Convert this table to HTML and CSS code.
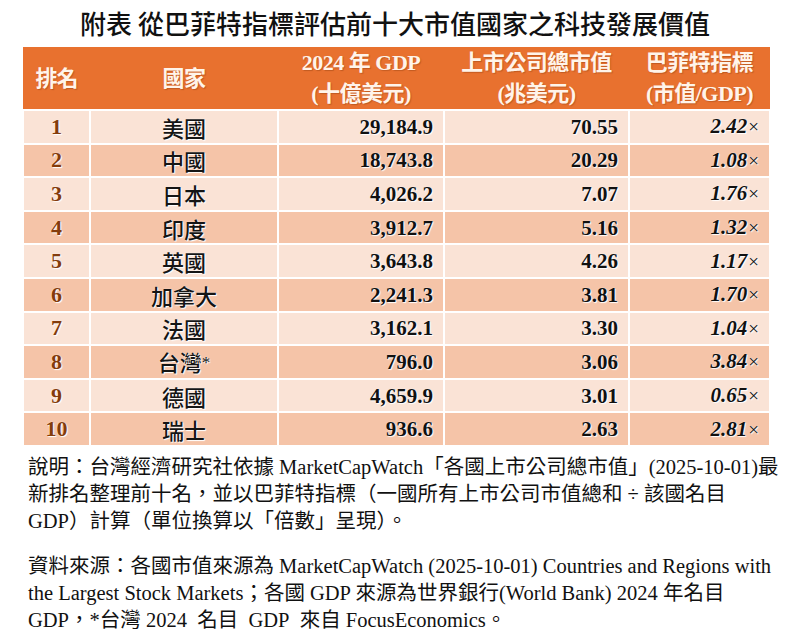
FILE: index.html
```html
<!DOCTYPE html>
<html lang="zh-Hant">
<head>
<meta charset="utf-8">
<title>附表 從巴菲特指標評估前十大市值國家之科技發展價值</title>
<link rel="stylesheet" href="styles.css">
</head>
<body>
<div class="page">
  <h1 class="title">附表 從巴菲特指標評估前十大市值國家之科技發展價值</h1>
  <table class="data">
    <colgroup>
      <col class="c-rank"><col class="c-country"><col class="c-gdp"><col class="c-cap"><col class="c-buff">
    </colgroup>
    <thead>
      <tr>
        <th>排名</th>
        <th>國家</th>
        <th>2024 年 GDP<br>(十億美元)</th>
        <th>上市公司總市值<br>(兆美元)</th>
        <th>巴菲特指標<br>(市值/GDP)</th>
      </tr>
    </thead>
    <tbody>
      <tr class="odd"><td class="rank">1</td><td class="country">美國</td><td class="num">29,184.9</td><td class="num">70.55</td><td class="num buff"><i>2.42</i><span class="x">×</span></td></tr>
      <tr class="even"><td class="rank">2</td><td class="country">中國</td><td class="num">18,743.8</td><td class="num">20.29</td><td class="num buff"><i>1.08</i><span class="x">×</span></td></tr>
      <tr class="odd"><td class="rank">3</td><td class="country">日本</td><td class="num">4,026.2</td><td class="num">7.07</td><td class="num buff"><i>1.76</i><span class="x">×</span></td></tr>
      <tr class="even"><td class="rank">4</td><td class="country">印度</td><td class="num">3,912.7</td><td class="num">5.16</td><td class="num buff"><i>1.32</i><span class="x">×</span></td></tr>
      <tr class="odd"><td class="rank">5</td><td class="country">英國</td><td class="num">3,643.8</td><td class="num">4.26</td><td class="num buff"><i>1.17</i><span class="x">×</span></td></tr>
      <tr class="even"><td class="rank">6</td><td class="country">加拿大</td><td class="num">2,241.3</td><td class="num">3.81</td><td class="num buff"><i>1.70</i><span class="x">×</span></td></tr>
      <tr class="odd"><td class="rank">7</td><td class="country">法國</td><td class="num">3,162.1</td><td class="num">3.30</td><td class="num buff"><i>1.04</i><span class="x">×</span></td></tr>
      <tr class="even"><td class="rank">8</td><td class="country">台灣<span class="star">*</span></td><td class="num">796.0</td><td class="num">3.06</td><td class="num buff"><i>3.84</i><span class="x">×</span></td></tr>
      <tr class="odd"><td class="rank">9</td><td class="country">德國</td><td class="num">4,659.9</td><td class="num">3.01</td><td class="num buff"><i>0.65</i><span class="x">×</span></td></tr>
      <tr class="even"><td class="rank">10</td><td class="country">瑞士</td><td class="num">936.6</td><td class="num">2.63</td><td class="num buff"><i>2.81</i><span class="x">×</span></td></tr>
    </tbody>
  </table>
  <div class="notes">
    <p class="note">說明：台灣經濟研究社依據 MarketCapWatch「各國上市公司總市值」(2025-10-01)最<br>新排名整理前十名，並以巴菲特指標（一國所有上市公司市值總和 ÷ 該國名目<br>GDP）計算（單位換算以「倍數」呈現）。</p>
    <p class="note">資料來源：各國市值來源為 MarketCapWatch (2025-10-01) Countries and Regions with<br>the Largest Stock Markets；各國 GDP 來源為世界銀行(World Bank) 2024 年名目<br>GDP，*台灣 2024&nbsp; 名目&nbsp; GDP&nbsp; 來自 FocusEconomics。</p>
  </div>
</div>
</body>
</html>
```

FILE: styles.css
```css
html, body {
  margin: 0;
  padding: 0;
  background: #ffffff;
}

.page {
  width: 800px;
  height: 638px;
  overflow: hidden;
  display: flex;
  flex-direction: column;
}

.title {
  margin: 8px 0 0 0;
  padding-right: 10px;
  font-family: "Noto Sans CJK TC", sans-serif;
  font-weight: 500;
  font-size: 26px;
  line-height: 30px;
  color: #111111;
  text-align: center;
  white-space: nowrap;
}

.data {
  margin: 9px 0 0 22px;
  width: 747px;
  table-layout: fixed;
  border-collapse: collapse;
}

.c-rank { width: 67px; }
.c-country { width: 188px; }
.c-gdp { width: 166px; }
.c-cap { width: 185px; }
.c-buff { width: 141px; }

.data th {
  height: 62px;
  padding: 0;
  background: #e8712f;
  color: #fff4ea;
  font-family: "Liberation Serif", "Noto Sans CJK TC", serif;
  font-weight: 700;
  font-size: 22px;
  line-height: 31px;
  text-align: center;
  border: 0;
  border-bottom: 2px solid #ffffff;
  text-shadow: 1px 1px 1px rgba(120, 50, 10, 0.35);
  letter-spacing: -0.5px;
}

.data th:first-child {
  letter-spacing: -1px;
}

.data td {
  height: 31.6px;
  padding: 0 10px 0 0;
  border: 2px solid #ffffff;
  font-family: "Liberation Serif", "Noto Sans CJK TC", serif;
  font-size: 21px;
  line-height: 28px;
  color: #111111;
  text-shadow: 1px 1px 1px #ffffff, 0 0 1px #ffffff;
  white-space: nowrap;
}

.data tr.odd td { background: #fae3d6; }
.data tr.even td { background: #f5c4a8; }

.data td.rank {
  padding: 0;
  text-align: center;
  font-weight: 700;
  font-size: 22px;
  color: #843c0c;
}

.data td.country {
  padding: 0;
  text-align: center;
  font-family: "Noto Sans CJK TC", sans-serif;
  font-weight: 500;
  font-size: 22px;
  color: #151515;
}

.star {
  font-family: "Liberation Serif", serif;
  font-size: 17px;
  vertical-align: 3px;
}

.data td.num {
  text-align: right;
  font-weight: 700;
}

.buff i {
  font-style: italic;
  font-weight: 700;
}

.buff .x {
  font-weight: 400;
  font-size: 19px;
  margin-left: 1px;
}

.notes {
  margin: 7px 0 0 28px;
  display: flex;
  flex-direction: column;
  gap: 18px;
}

.note {
  margin: 0;
  font-family: "Liberation Serif", "Noto Sans CJK TC", serif;
  font-size: 20.5px;
  line-height: 27px;
  color: #111111;
  white-space: nowrap;
}
```
